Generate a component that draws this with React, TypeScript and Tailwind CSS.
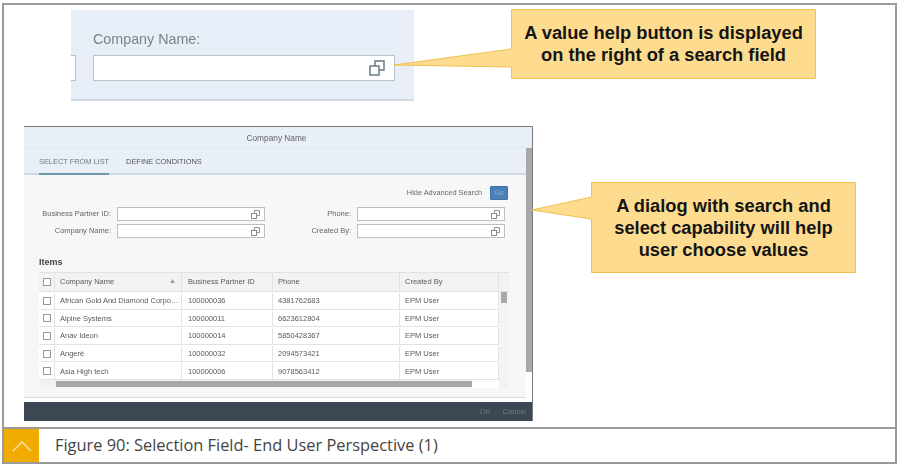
const sans = "font-['Liberation_Sans',Arial,sans-serif]";

function ValueHelp({ size = 10, color = "#5f7480" }: { size?: number; color?: string }) {
  return (
    <svg width={size} height={size} viewBox="0 0 16 16" fill="none" stroke={color} strokeWidth="1.4">
      <rect x="1" y="6" width="9" height="9" />
      <path d="M6 6V1h9v9h-5" />
    </svg>
  );
}

function Callout({
  className,
  w,
  h,
  tail,
  lines,
}: {
  className: string;
  w: number;
  h: number;
  tail: { y1: number; y2: number; tipX: number; tipY: number };
  lines: string[];
}) {
  const t = tail.tipX;
  return (
    <div className={`absolute ${className}`} style={{ width: w, height: h }}>
      <svg
        className="absolute top-0 overflow-visible"
        style={{ left: 0 }}
        width={w}
        height={h}
        viewBox={`0 0 ${w} ${h}`}
      >
        <polygon
          points={`0.5,0.5 ${w - 0.5},0.5 ${w - 0.5},${h - 0.5} 0.5,${h - 0.5} 0.5,${tail.y2} ${t},${tail.tipY} 0.5,${tail.y1}`}
          fill="#fddc8f"
          stroke="#eec04e"
          strokeWidth="1"
        />
      </svg>
      <div className={`relative flex h-full flex-col items-center justify-center text-[18.3px] leading-[22px] font-bold text-[#151515] ${sans}`}>
        {lines.map((l) => (
          <div key={l}>{l}</div>
        ))}
      </div>
    </div>
  );
}

function Field({ label, labelW }: { label: string; labelW: string }) {
  return (
    <div className="flex items-center">
      <div className={`${labelW} whitespace-nowrap pr-[6px] text-right text-[7.5px] text-[#666]`}>{label}</div>
      <div className="flex h-[14px] w-[148px] items-center justify-end border border-[#bfbfbf] bg-white pr-[4px]">
        <ValueHelp size={9} />
      </div>
    </div>
  );
}

function Check() {
  return <div className="h-[8px] w-[8px] border border-[#9a9a9a] bg-white" />;
}

const rows = [
  ["African Gold And Diamond Corpo…", "100000036", "4381762683"],
  ["Alpine Systems", "100000011", "6623612804"],
  ["Anav Ideon", "100000014", "5850428367"],
  ["Angerè", "100000032", "2094573421"],
  ["Asia High tech", "100000006", "9078563412"],
];

function Dialog() {
  return (
    <div className={`ml-[20px] mt-[25px] flex h-[295px] w-[509px] flex-col border-r border-t border-[#7c7c7c] bg-[#f7f7f7] blur-[0.3px] ${sans}`}>
      <div className="flex h-[21px] items-center justify-center border-b border-[#dfe7ef] bg-[#e8eff7] pr-[3px] pt-[3px] text-[8.3px] text-[#666]">
        Company Name
      </div>
      <div className="flex min-h-0 flex-1">
        <div className="flex min-w-0 flex-1 flex-col">
          <div className="flex h-[27px] items-end gap-[17px] border-b-2 border-[#cdd8e3] bg-[#e8eff7] pl-[15px] text-[7.4px] text-[#555]">
            <div className="-mb-[2px] flex h-[27px] items-center border-b-2 border-[#6d97ad] pt-[3px] text-[#6a7a84]">SELECT FROM LIST</div>
            <div className="flex h-[25px] items-center pt-[3px]">DEFINE CONDITIONS</div>
          </div>
          <div className="flex min-h-0 flex-1 flex-col">
            <div className="flex h-[32px] items-center justify-end gap-[8px] pr-[18px] pt-[4px]">
              <span className="text-[7.4px] text-[#666]">Hide Advanced Search</span>
              <div className="flex h-[14px] w-[18px] items-center justify-center rounded-[1px] border border-[#3f72a8] bg-[#4a7fb8] text-[7px] text-[#8fb0d0]">Go</div>
            </div>
            <div className="flex">
              <div className="flex flex-col gap-[3px]">
                <Field label="Business Partner ID:" labelW="w-[93px]" />
                <Field label="Company Name:" labelW="w-[93px]" />
              </div>
              <div className="flex flex-col gap-[3px]">
                <Field label="Phone:" labelW="w-[92px]" />
                <Field label="Created By:" labelW="w-[92px]" />
              </div>
            </div>
            <div className="ml-[15px] mt-[17px] h-[15px] text-[9px] font-bold leading-[15px] text-[#444]">Items</div>
            <div className="relative ml-[15px] mt-[2px] w-[470px] border-t border-[#e2e2e2] text-[7.5px] text-[#5a5a5a]">
              <div className="flex h-[19px] border-b border-[#e2e2e2] bg-[#f2f2f2] pb-[1px]">
                <div className="flex w-[16px] items-center justify-center border-r border-[#e2e2e2]"><Check /></div>
                <div className="flex w-[127px] items-center justify-between border-r border-[#e2e2e2] pl-[5px] pr-[5px]">
                  <span>Company Name</span>
                  <span className="text-[7px] text-[#999]">▲</span>
                </div>
                <div className="flex w-[91px] items-center border-r border-[#e2e2e2] pl-[6px]">Business Partner ID</div>
                <div className="flex w-[127px] items-center border-r border-[#e2e2e2] pl-[5px]">Phone</div>
                <div className="flex w-[99px] items-center border-r border-[#e2e2e2] pl-[5px]">Created By</div>
              </div>
              <div className="flex">
                <div className="w-[460px]">
                  {rows.map((r) => (
                    <div key={r[1]} className="flex h-[17.6px] border-b border-[#e2e2e2] bg-white pt-[1px]">
                      <div className="flex w-[16px] items-center justify-center border-r border-[#e2e2e2]"><Check /></div>
                      <div className="flex w-[127px] items-center whitespace-nowrap border-r border-[#e2e2e2] pl-[5px]">{r[0]}</div>
                      <div className="flex w-[91px] items-center border-r border-[#e2e2e2] pl-[6px]">{r[1]}</div>
                      <div className="flex w-[127px] items-center border-r border-[#e2e2e2] pl-[5px]">{r[2]}</div>
                      <div className="flex w-[99px] items-center border-r border-[#e2e2e2] pl-[5px]">EPM User</div>
                    </div>
                  ))}
                </div>
                <div className="w-[10px] bg-[#f4f4f4] px-[2px]">
                  <div className="h-[11px] bg-[#a8a8a8]" />
                </div>
              </div>
              <div className="flex h-[8px] bg-[#f2f2f2]">
                <div className="w-[17px]" />
                <div className="my-px h-[6px] w-[416px] bg-[#a8a8a8]" />
                <div className="w-[27px] bg-white" />
              </div>
            </div>
          </div>
          <div className="h-[5px] border-t border-[#dcdcdc] bg-white" />
        </div>
        <div className="w-[6px] bg-white">
          <div className="h-[224px] bg-[#a8a8a8]" />
        </div>
      </div>
      <div className="flex h-[19px] items-center justify-end gap-[12px] bg-[#3c4754] pr-[6px] text-[7.5px] text-[#6f7a86]">
        <span>OK</span>
        <span>Cancel</span>
      </div>
    </div>
  );
}

export default function App() {
  return (
    <div className="h-[466px] w-[900px] bg-white pl-[2px] pt-[3px]">
      <div className="flex h-[461px] w-[895px] flex-col border-2 border-[#9a9a9a]">
        <div className="relative h-[422px]">
          <div className={`ml-[67px] mt-[5px] flex h-[91px] w-[343px] flex-col border-b-2 border-[#d3dce6] bg-[#e8eef7] blur-[0.3px] ${sans}`}>
            <div className="ml-[22px] mt-[19px] h-[26px] text-[14.3px] leading-[20px] text-[#7d8285]">Company Name:</div>
            <div className="flex h-[26px]">
              <div className="h-full w-[5px] border-y border-r border-[#bcbcbc] bg-white" />
              <div className="ml-[17px] flex h-full w-[302px] items-center justify-end border border-[#bcc2c6] bg-white pr-[9px]">
                <ValueHelp size={16} />
              </div>
            </div>
          </div>
          <Dialog />
          <Callout
            className="left-[507px] top-[4px]"
            w={305}
            h={70}
            tail={{ y1: 40, y2: 58, tipX: -117, tipY: 56 }}
            lines={["A value help button is displayed", "on the right of a search field"]}
          />
          <Callout
            className="left-[587px] top-[177px]"
            w={265}
            h={91}
            tail={{ y1: 15, y2: 37, tipX: -59, tipY: 28 }}
            lines={["A dialog with search and", "select capability will help", "user choose values"]}
          />
        </div>
        <div className="flex flex-1 border-t-2 border-[#9a9a9a]">
          <div className="flex w-[35px] items-center justify-center bg-[#f0ab00]">
            <svg width="22" height="12" viewBox="0 0 22 12" fill="none" stroke="#f9dc9a" strokeWidth="1.6">
              <path d="M2 11 L11 2 L20 11" />
            </svg>
          </div>
          <div className="ml-[16px] flex items-center whitespace-nowrap font-['Open_Sans',sans-serif] text-[16.4px] text-[#444]">
            Figure 90: Selection Field- End User Perspective (1)
          </div>
        </div>
      </div>
    </div>
  );
}
